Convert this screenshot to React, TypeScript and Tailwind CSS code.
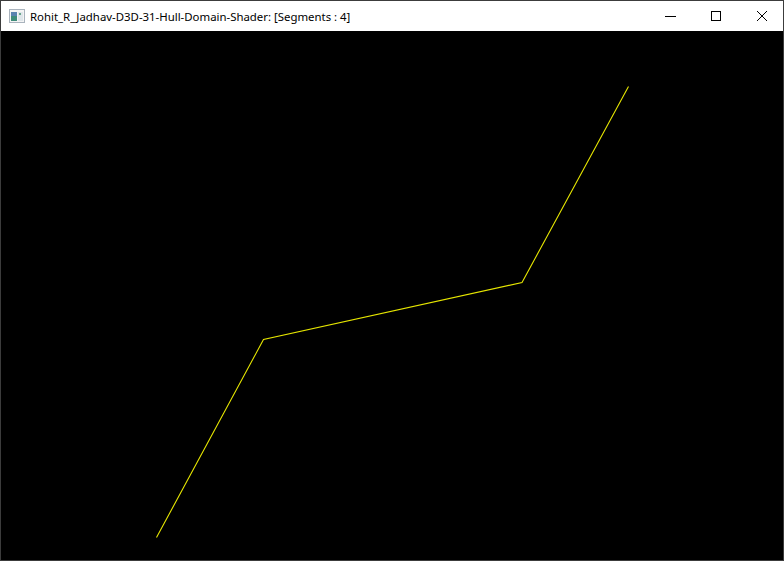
import React from "react";

export default function App() {
  return (
    <div className="w-[784px] h-[561px] border border-[#3c3c3c] bg-black flex flex-col overflow-hidden">
      <div className="h-[30px] bg-white flex items-center shrink-0">
        <div className="w-[29px] flex justify-center pl-[2px]">
          <svg width="16" height="14" viewBox="0 0 16 14">
            <rect x="0.5" y="0.5" width="15" height="13" fill="#f4f4f4" stroke="#a9b3bd" />
            <rect x="2" y="3" width="6" height="9" fill="#3f8c7a" />
            <rect x="2" y="3" width="6" height="4" fill="#5a83b0" />
            <rect x="9" y="3" width="5" height="9" fill="#dfe6ea" />
            <rect x="10" y="4" width="2" height="2" fill="#6aa58c" />
          </svg>
        </div>
        <span className="text-[11.4px] text-black leading-none pt-[1px]" style={{ fontFamily: '"Noto Sans", "Segoe UI", sans-serif' }}>
          Rohit_R_Jadhav-D3D-31-Hull-Domain-Shader: [Segments : 4]
        </span>
        <div className="ml-auto flex h-full items-center pr-[16px]">
          <svg width="11" height="10" viewBox="0 0 11 10" className="block"><path d="M0 5.5H11" stroke="#000" strokeWidth="1" /></svg>
          <svg width="10" height="10" viewBox="0 0 10 10" className="block ml-[35px]"><rect x="0.5" y="0.5" width="9" height="9" fill="none" stroke="#000" strokeWidth="1" /></svg>
          <svg width="10" height="10" viewBox="0 0 10 10" className="block ml-[36px]"><path d="M0 0L10 10M10 0L0 10" stroke="#000" strokeWidth="1" /></svg>
        </div>
      </div>
      <div className="flex-1 bg-black">
        <svg width="782" height="529" viewBox="1 31 782 529" className="block">
          <polyline
            points="156.5,537.5 263.5,339.5 522,282.5 628.5,86.5"
            fill="none"
            stroke="#e6e600"
            strokeWidth="1.1"
          />
        </svg>
      </div>
    </div>
  );
}
